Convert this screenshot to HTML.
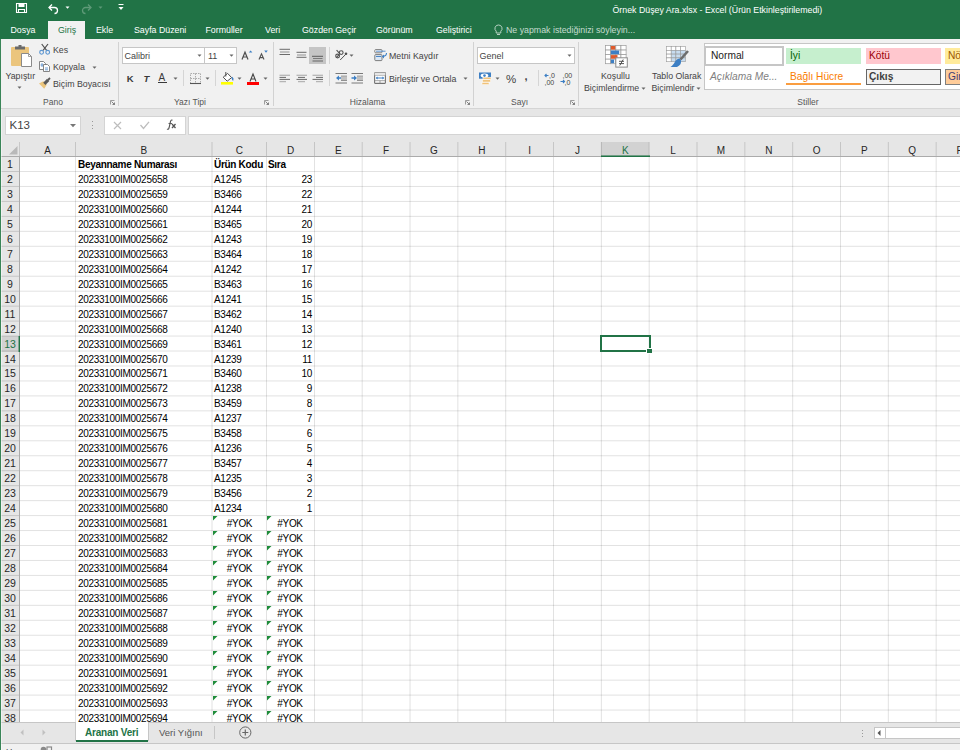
<!DOCTYPE html><html><head><meta charset="utf-8"><style>
html,body{margin:0;padding:0;}
body{width:960px;height:750px;overflow:hidden;position:relative;background:#fff;font-family:"Liberation Sans", sans-serif;}
.t{position:absolute;white-space:nowrap;line-height:1;}
svg{position:absolute;overflow:visible;}
</style></head><body>
<div style="position:absolute;left:0px;top:0px;width:960px;height:39px;background:#217346"></div>
<div class="t" style="left:612.5px;top:6.15px;font-size:8.8px;color:#fff">Örnek Düşey Ara.xlsx - Excel (Ürün Etkinleştirilemedi)</div>
<svg style="left:16px;top:3px" width="11" height="10" viewBox="0 0 11 10"><path d="M0.5 0.5H10.5V9.5H0.5Z" fill="none" stroke="#fff" stroke-width="1.1"/><rect x="2.5" y="0.5" width="6" height="3.5" fill="#fff"/><path d="M2.5 9.5V6.5H8.5V9.5" fill="none" stroke="#fff" stroke-width="1.1"/></svg>
<svg style="left:48px;top:3px" width="11" height="10" viewBox="0 0 11 10"><path d="M1.5 4.5H6.5A3 3 0 0 1 6.5 10.5" fill="none" stroke="#fff" stroke-width="1.3"/><path d="M4 1.5L1 4.5L4 7.5" fill="none" stroke="#fff" stroke-width="1.3"/></svg>
<svg style="left:64.5px;top:5.5px" width="5" height="3" viewBox="0 0 5 3"><path d="M0.5 0.5H4.5L2.5 2.8Z" fill="#fff"/></svg>
<svg style="left:81px;top:3px" width="11" height="10" viewBox="0 0 11 10"><path d="M9.5 4.5H4.5A3 3 0 0 0 4.5 10.5" fill="none" stroke="#5f9a78" stroke-width="1.3"/><path d="M7 1.5L10 4.5L7 7.5" fill="none" stroke="#5f9a78" stroke-width="1.3"/></svg>
<svg style="left:97.5px;top:5.5px" width="5" height="3" viewBox="0 0 5 3"><path d="M0.5 0.5H4.5L2.5 2.8Z" fill="#5f9a78"/></svg>
<svg style="left:118.3px;top:4px" width="6" height="7" viewBox="0 0 6 7"><rect x="0.5" y="0" width="5" height="1" fill="#fff"/><path d="M0.5 3H5.5L3 6Z" fill="#fff"/></svg>
<div class="t" style="left:10.5px;top:25.95px;font-size:8.8px;color:#fff">Dosya</div>
<div class="t" style="left:96px;top:25.95px;font-size:8.8px;color:#fff">Ekle</div>
<div class="t" style="left:134px;top:25.95px;font-size:8.8px;color:#fff">Sayfa Düzeni</div>
<div class="t" style="left:205.5px;top:25.95px;font-size:8.8px;color:#fff">Formüller</div>
<div class="t" style="left:265px;top:25.95px;font-size:8.8px;color:#fff">Veri</div>
<div class="t" style="left:302px;top:25.95px;font-size:8.8px;color:#fff">Gözden Geçir</div>
<div class="t" style="left:376px;top:25.95px;font-size:8.8px;color:#fff">Görünüm</div>
<div class="t" style="left:436px;top:25.95px;font-size:8.8px;color:#fff">Geliştirici</div>
<div style="position:absolute;left:48px;top:21px;width:37px;height:18px;background:#f1f1f1"></div>
<div class="t" style="left:58px;top:25.95px;font-size:8.8px;color:#217346">Giriş</div>
<svg style="left:494px;top:24px" width="9" height="12" viewBox="0 0 9 12"><path d="M4.5 1A3.5 3.5 0 0 0 2.2 7.2V9H6.8V7.2A3.5 3.5 0 0 0 4.5 1Z" fill="none" stroke="#c5dccf" stroke-width="0.9"/><path d="M3 10.5H6" stroke="#c5dccf" stroke-width="0.9"/></svg>
<div class="t" style="left:506px;top:25.95px;font-size:8.8px;color:#c5dccf">Ne yapmak istediğinizi söyleyin...</div>
<div style="position:absolute;left:0px;top:39px;width:960px;height:69px;background:#f1f1f1"></div>
<div style="position:absolute;left:0px;top:108px;width:960px;height:1px;background:#d5d5d5"></div>
<div style="position:absolute;left:118px;top:42px;width:1px;height:64px;background:#d2d2d2"></div>
<div style="position:absolute;left:273px;top:42px;width:1px;height:64px;background:#d2d2d2"></div>
<div style="position:absolute;left:473px;top:42px;width:1px;height:64px;background:#d2d2d2"></div>
<div style="position:absolute;left:578px;top:42px;width:1px;height:64px;background:#d2d2d2"></div>
<div class="t" style="left:13px;top:97.80px;font-size:8.5px;width:80px;text-align:center;color:#555">Pano</div>
<div class="t" style="left:150px;top:97.80px;font-size:8.5px;width:80px;text-align:center;color:#555">Yazı Tipi</div>
<div class="t" style="left:327.5px;top:97.80px;font-size:8.5px;width:80px;text-align:center;color:#555">Hizalama</div>
<div class="t" style="left:479.5px;top:97.80px;font-size:8.5px;width:80px;text-align:center;color:#555">Sayı</div>
<div class="t" style="left:768px;top:97.80px;font-size:8.5px;width:80px;text-align:center;color:#555">Stiller</div>
<svg style="left:110px;top:100px" width="5" height="5" viewBox="0 0 5 5"><path d="M0.5 4.5V0.5H4.5" fill="none" stroke="#888" stroke-width="0.8"/><path d="M1.5 1.5L4.5 4.5M4.5 2.5V4.5H2.5" fill="none" stroke="#666" stroke-width="0.8"/></svg>
<svg style="left:264px;top:100px" width="5" height="5" viewBox="0 0 5 5"><path d="M0.5 4.5V0.5H4.5" fill="none" stroke="#888" stroke-width="0.8"/><path d="M1.5 1.5L4.5 4.5M4.5 2.5V4.5H2.5" fill="none" stroke="#666" stroke-width="0.8"/></svg>
<svg style="left:465px;top:100px" width="5" height="5" viewBox="0 0 5 5"><path d="M0.5 4.5V0.5H4.5" fill="none" stroke="#888" stroke-width="0.8"/><path d="M1.5 1.5L4.5 4.5M4.5 2.5V4.5H2.5" fill="none" stroke="#666" stroke-width="0.8"/></svg>
<svg style="left:570px;top:100px" width="5" height="5" viewBox="0 0 5 5"><path d="M0.5 4.5V0.5H4.5" fill="none" stroke="#888" stroke-width="0.8"/><path d="M1.5 1.5L4.5 4.5M4.5 2.5V4.5H2.5" fill="none" stroke="#666" stroke-width="0.8"/></svg>
<svg style="left:10px;top:44px" width="23" height="24" viewBox="0 0 23 24"><rect x="1" y="3" width="18" height="19" rx="1" fill="#ebc57d"/>
<path d="M5 2.5H15V5.5H5Z" fill="#6a6a6a"/><rect x="8.5" y="1" width="3" height="2" fill="#6a6a6a"/>
<path d="M11.5 9.5H18.5L21.5 12.5V22.5H11.5Z" fill="#fff" stroke="#8a8a8a" stroke-width="1"/><path d="M18.5 9.5V12.5H21.5" fill="none" stroke="#8a8a8a" stroke-width="0.8"/></svg>
<div class="t" style="left:5.5px;top:72.05px;font-size:8.8px;color:#444">Yapıştır</div>
<svg style="left:17.0px;top:85.5px" width="5" height="3" viewBox="0 0 5 3"><path d="M0.5 0.5H4.5L2.5 2.8Z" fill="#666"/></svg>
<svg style="left:39px;top:43px" width="12" height="12" viewBox="0 0 12 12"><path d="M2.7 1L7.6 7.3M9 1L4.1 7.3" stroke="#505050" stroke-width="1.2"/><circle cx="2.6" cy="9.3" r="1.9" fill="none" stroke="#5b95d0" stroke-width="1.1"/><circle cx="8.7" cy="9.3" r="1.9" fill="none" stroke="#5b95d0" stroke-width="1.1"/></svg>
<div class="t" style="left:53px;top:45.55px;font-size:8.8px;color:#444">Kes</div>
<svg style="left:39px;top:61px" width="12" height="11" viewBox="0 0 12 11"><path d="M0.5 0.5H4.5L6.5 2.5V8.5H0.5Z" fill="#fff" stroke="#777" stroke-width="0.9"/><path d="M3 2V6M1.5 4H4.5" stroke="#4a86c8" stroke-width="0.8"/>
<path d="M4.5 3.5H8.5L10.5 5.5V10.5H4.5Z" fill="#fff" stroke="#777" stroke-width="0.9"/><path d="M6 7H9M6 8.8H9" stroke="#4a86c8" stroke-width="0.8"/></svg>
<div class="t" style="left:53px;top:63.05px;font-size:8.8px;color:#444">Kopyala</div>
<svg style="left:91.5px;top:66.0px" width="5" height="3" viewBox="0 0 5 3"><path d="M0.5 0.5H4.5L2.5 2.8Z" fill="#666"/></svg>
<svg style="left:39px;top:77px" width="13" height="13" viewBox="0 0 13 13"><path d="M0 6.5L4.3 4.3L7.8 7.8L5.2 11.8Z" fill="#ebc57d"/><path d="M5.3 6.8L9.2 2.9" stroke="#5a5a5a" stroke-width="3.2"/><path d="M9 3L11 1" stroke="#5a5a5a" stroke-width="1.8"/></svg>
<div class="t" style="left:53px;top:80.05px;font-size:8.8px;color:#444">Biçim Boyacısı</div>
<div style="position:absolute;left:122px;top:47px;width:83px;height:17px;background:#fff;border:1px solid #c6c6c6;box-sizing:border-box"></div>
<div class="t" style="left:124.5px;top:52.18px;font-size:9px;color:#444">Calibri</div>
<svg style="left:196.5px;top:54.0px" width="5" height="3" viewBox="0 0 5 3"><path d="M0.5 0.5H4.5L2.5 2.8Z" fill="#666"/></svg>
<div style="position:absolute;left:204px;top:47px;width:33px;height:17px;background:#fff;border:1px solid #c6c6c6;box-sizing:border-box"></div>
<div class="t" style="left:208px;top:52.18px;font-size:9px;color:#444">11</div>
<svg style="left:228.5px;top:54.0px" width="5" height="3" viewBox="0 0 5 3"><path d="M0.5 0.5H4.5L2.5 2.8Z" fill="#666"/></svg>
<svg style="left:241px;top:50px" width="12" height="10" viewBox="0 0 12 10"><path d="M1 9.5L4 2.2L7 9.5M2.2 7H5.8" fill="none" stroke="#505050" stroke-width="1.2"/><path d="M7.8 2.6L9.6 0.4L11.4 2.6Z" fill="#3d7fc4"/></svg>
<svg style="left:258px;top:50px" width="10" height="10" viewBox="0 0 10 10"><path d="M1 9.5L3.5 3.8L6 9.5M2 7.6H5" fill="none" stroke="#505050" stroke-width="1.1"/><path d="M6.2 0.6H9.8L8 2.8Z" fill="#3d7fc4"/></svg>
<div class="t" style="left:126.8px;top:73.96px;font-size:9.5px;color:#3a3a3a;font-weight:bold">K</div>
<div class="t" style="left:143.5px;top:73.96px;font-size:9.5px;color:#3a3a3a;font-weight:bold;font-style:italic">T</div>
<div class="t" style="left:158.5px;top:73.03px;font-size:10px;color:#3a3a3a">A</div>
<div style="position:absolute;left:158px;top:82px;width:9px;height:1.2px;background:#3a3a3a"></div>
<svg style="left:172.5px;top:77.0px" width="5" height="3" viewBox="0 0 5 3"><path d="M0.5 0.5H4.5L2.5 2.8Z" fill="#666"/></svg>
<div style="position:absolute;left:183px;top:70px;width:1px;height:16px;background:#d5d5d5"></div>
<svg style="left:190px;top:73px" width="11" height="11" viewBox="0 0 11 11"><path d="M0.5 0.5H10.5V10.5H0.5ZM5.5 0.5V10.5M0.5 5.5H10.5" fill="none" stroke="#9a9a9a" stroke-width="0.8" stroke-dasharray="1.5 1"/><path d="M0 10.5H11" stroke="#555" stroke-width="1.1"/></svg>
<svg style="left:205.0px;top:77.0px" width="5" height="3" viewBox="0 0 5 3"><path d="M0.5 0.5H4.5L2.5 2.8Z" fill="#666"/></svg>
<div style="position:absolute;left:215px;top:70px;width:1px;height:16px;background:#d5d5d5"></div>
<svg style="left:221px;top:71px" width="13" height="14" viewBox="0 0 13 14"><path d="M2.2 6.2L6.6 2.4L10.6 6.6L6.2 10.2Z" fill="#fff" stroke="#505050" stroke-width="1"/><path d="M4.8 1V5.5" stroke="#505050" stroke-width="1"/><path d="M10.8 6.4Q12.4 7.6 11.6 9.4" fill="none" stroke="#3d7fc4" stroke-width="1.5"/><rect x="0" y="11" width="12" height="2.6" fill="#ffff00"/></svg>
<svg style="left:237.0px;top:77.0px" width="5" height="3" viewBox="0 0 5 3"><path d="M0.5 0.5H4.5L2.5 2.8Z" fill="#666"/></svg>
<svg style="left:247px;top:73px" width="13" height="12" viewBox="0 0 13 12"><path d="M3 8.5L6 1L9 8.5M4 6H8" fill="none" stroke="#444" stroke-width="1.1"/><rect x="0" y="9" width="12" height="3" fill="#ff0000"/></svg>
<svg style="left:262.5px;top:77.0px" width="5" height="3" viewBox="0 0 5 3"><path d="M0.5 0.5H4.5L2.5 2.8Z" fill="#666"/></svg>
<div style="position:absolute;left:309px;top:47px;width:17px;height:17px;background:#c5c5c5"></div>
<svg style="left:279px;top:47px" width="12" height="14" viewBox="0 0 12 14"><path d="M0.5 2.3H11" stroke="#6b6b6b" stroke-width="1"/><path d="M1 5H10.5" stroke="#b5b5b5" stroke-width="1.6"/><path d="M0.5 7.5H11" stroke="#6b6b6b" stroke-width="1"/></svg>
<svg style="left:296px;top:50px" width="12" height="14" viewBox="0 0 12 14"><path d="M0.5 2.3H10.5" stroke="#6b6b6b" stroke-width="1"/><path d="M1 5H10" stroke="#b5b5b5" stroke-width="1.6"/><path d="M0.5 7.3H10.5" stroke="#6b6b6b" stroke-width="1"/></svg>
<svg style="left:312px;top:53px" width="12" height="14" viewBox="0 0 12 14"><path d="M0 3.3H11" stroke="#5a5a5a" stroke-width="1"/><path d="M1 5.5H10.5" stroke="#7a7a7a" stroke-width="1"/><path d="M0.5 8H11" stroke="#8a8a8a" stroke-width="1.6"/></svg>
<div style="position:absolute;left:329px;top:47px;width:1px;height:17px;background:#d5d5d5"></div>
<svg style="left:332px;top:46px" width="24" height="18" viewBox="0 0 24 18"><circle cx="5.6" cy="10" r="1.9" fill="none" stroke="#505050" stroke-width="1.1"/><path d="M4.2 11.6L7.4 8.4" stroke="#505050" stroke-width="1.1"/><circle cx="9.2" cy="6.6" r="1.9" fill="none" stroke="#505050" stroke-width="1.1"/><path d="M4.6 4.2L8 7.8" stroke="#505050" stroke-width="1.1"/><path d="M8.2 14L14 8" stroke="#505050" stroke-width="1"/><circle cx="14" cy="7.8" r="1.3" fill="#505050"/></svg>
<svg style="left:349.0px;top:53.5px" width="5" height="3" viewBox="0 0 5 3"><path d="M0.5 0.5H4.5L2.5 2.8Z" fill="#666"/></svg>
<svg style="left:279px;top:73px" width="12" height="14" viewBox="0 0 12 14"><path d="M0.5 2.3H11" stroke="#b5b5b5" stroke-width="1.3"/><path d="M0.5 4.4H7" stroke="#6b6b6b" stroke-width="1"/><path d="M0.5 6.4H11" stroke="#6b6b6b" stroke-width="1"/><path d="M0.5 8.6H7" stroke="#b5b5b5" stroke-width="1.3"/></svg>
<svg style="left:296px;top:73px" width="12" height="14" viewBox="0 0 12 14"><path d="M0.5 2.3H11" stroke="#b5b5b5" stroke-width="1.3"/><path d="M2 4.4H9" stroke="#6b6b6b" stroke-width="1"/><path d="M0.5 6.4H11" stroke="#6b6b6b" stroke-width="1"/><path d="M2 8.6H9" stroke="#b5b5b5" stroke-width="1.3"/></svg>
<svg style="left:312px;top:73px" width="12" height="14" viewBox="0 0 12 14"><path d="M0.5 2.3H11" stroke="#b5b5b5" stroke-width="1.3"/><path d="M4 4.4H11" stroke="#6b6b6b" stroke-width="1"/><path d="M0.5 6.4H11" stroke="#6b6b6b" stroke-width="1"/><path d="M4 8.6H11" stroke="#b5b5b5" stroke-width="1.3"/></svg>
<div style="position:absolute;left:329px;top:70px;width:1px;height:16px;background:#d5d5d5"></div>
<svg style="left:335px;top:73px" width="13" height="11" viewBox="0 0 13 11"><path d="M0.5 0.5H12M6 3.2H12M6 5.2H12M6 7.3H12M0.5 10H12" stroke="#6b6b6b" stroke-width="0.9"/><path d="M6 3.5H12V7H6Z" fill="#c0c0c0"/><path d="M1 5L4 2.5V7.5Z" fill="#3d7fc4"/><path d="M3 5H6" stroke="#3d7fc4" stroke-width="1.5"/></svg>
<svg style="left:351px;top:73px" width="13" height="11" viewBox="0 0 13 11"><path d="M0.5 0.5H12M6 3.2H12M6 5.2H12M6 7.3H12M0.5 10H12" stroke="#6b6b6b" stroke-width="0.9"/><path d="M6 3.5H12V7H6Z" fill="#c0c0c0"/><path d="M6 5L3 2.5V7.5Z" fill="#3d7fc4"/><path d="M0.5 5H3.5" stroke="#3d7fc4" stroke-width="1.5"/></svg>
<svg style="left:374px;top:49px" width="14" height="12" viewBox="0 0 14 12"><rect x="0.8" y="0.6" width="7.2" height="3.2" rx="0.8" fill="#fff" stroke="#707070" stroke-width="0.9"/><path d="M2 2.2H11.5" stroke="#4a86c8" stroke-width="0.9"/><rect x="0.8" y="5.6" width="7.2" height="6" rx="0.8" fill="#dce8f5" stroke="#707070" stroke-width="0.9"/><path d="M2 7.5H7" stroke="#4a86c8" stroke-width="1"/><path d="M12.5 4Q12.5 7 9 7.5" fill="none" stroke="#3d7fc4" stroke-width="1.1"/><path d="M10 5.6L7.8 7.6L10 9.4Z" fill="#3d7fc4"/></svg>
<div class="t" style="left:389px;top:51.65px;font-size:8.8px;color:#444">Metni Kaydır</div>
<svg style="left:374px;top:72px" width="12" height="12" viewBox="0 0 12 12"><rect x="0.6" y="0.6" width="10.8" height="10.8" rx="0.6" fill="#fff" stroke="#727272" stroke-width="1.1"/><path d="M0.6 3.3H11.4M0.6 8.7H11.4M6 0.6V3.3M6 8.7V11.4" stroke="#8a8a8a" stroke-width="0.8"/><path d="M0.6 0.6H11.4V3.3H0.6Z" fill="#e6e6e6"/><path d="M2.3 6H9.7" stroke="#3d7fc4" stroke-width="1"/><path d="M1.8 6L3.6 4.6V7.4ZM10.2 6L8.4 4.6V7.4Z" fill="#3d7fc4"/></svg>
<div class="t" style="left:389px;top:74.75px;font-size:8.8px;color:#444">Birleştir ve Ortala</div>
<svg style="left:462.5px;top:77.0px" width="5" height="3" viewBox="0 0 5 3"><path d="M0.5 0.5H4.5L2.5 2.8Z" fill="#666"/></svg>
<div style="position:absolute;left:477px;top:47px;width:98px;height:17px;background:#fff;border:1px solid #c6c6c6;box-sizing:border-box"></div>
<div class="t" style="left:479.5px;top:52.18px;font-size:9px;color:#444">Genel</div>
<svg style="left:566.5px;top:54.0px" width="5" height="3" viewBox="0 0 5 3"><path d="M0.5 0.5H4.5L2.5 2.8Z" fill="#666"/></svg>
<svg style="left:479px;top:72px" width="13" height="13" viewBox="0 0 13 13"><rect x="0" y="0.5" width="12" height="6.2" fill="#3d7fc4"/><ellipse cx="5.5" cy="3.6" rx="3.8" ry="2.1" fill="#fff"/><circle cx="5.5" cy="3.6" r="1.3" fill="#3d7fc4"/><rect x="4" y="5.2" width="8" height="2.2" fill="#f0c27a" stroke="#fff" stroke-width="0.5"/><rect x="3.5" y="7.8" width="8" height="2.2" fill="#f0c27a" stroke="#fff" stroke-width="0.5"/><rect x="3" y="10.4" width="7" height="2.2" fill="#f0c27a" stroke="#fff" stroke-width="0.5"/></svg>
<svg style="left:494.5px;top:77.0px" width="5" height="3" viewBox="0 0 5 3"><path d="M0.5 0.5H4.5L2.5 2.8Z" fill="#666"/></svg>
<div class="t" style="left:506px;top:73.77px;font-size:11.5px;color:#444">%</div>
<div class="t" style="left:524.5px;top:70.69px;font-size:11px;color:#444;font-weight:bold">,</div>
<div style="position:absolute;left:538px;top:70px;width:1px;height:16px;background:#d5d5d5"></div>
<svg style="left:544px;top:72px" width="12" height="13" viewBox="0 0 12 13"><text x="5" y="6" font-size="7" font-family="Liberation Sans" fill="#444">,0</text><text x="0.5" y="12.5" font-size="7" font-family="Liberation Sans" fill="#444">,00</text><path d="M4.5 3.5H1M2.5 2L1 3.5L2.5 5" fill="none" stroke="#3d7fc4" stroke-width="1.1"/></svg>
<svg style="left:560px;top:72px" width="12" height="13" viewBox="0 0 12 13"><text x="2.5" y="6" font-size="7" font-family="Liberation Sans" fill="#444">,00</text><text x="4.5" y="12.5" font-size="7" font-family="Liberation Sans" fill="#444">,0</text><path d="M0.5 9.5H4.5M3 8L4.5 9.5L3 11" fill="none" stroke="#3d7fc4" stroke-width="1.1"/></svg>
<svg style="left:604.8px;top:44.8px" width="24" height="24" viewBox="0 0 24 24"><rect x="0.50" y="0.50" width="5.15" height="4.55" fill="#fff" stroke="#9a9a9a" stroke-width="0.7"/><rect x="5.65" y="0.50" width="5.15" height="4.55" fill="#fff" stroke="#9a9a9a" stroke-width="0.7"/><rect x="10.80" y="0.50" width="5.15" height="4.55" fill="#fff" stroke="#9a9a9a" stroke-width="0.7"/><rect x="15.95" y="0.50" width="5.15" height="4.55" fill="#fff" stroke="#9a9a9a" stroke-width="0.7"/><rect x="0.50" y="5.05" width="5.15" height="4.55" fill="#fff" stroke="#9a9a9a" stroke-width="0.7"/><rect x="5.65" y="5.05" width="5.15" height="4.55" fill="#fff" stroke="#9a9a9a" stroke-width="0.7"/><rect x="10.80" y="5.05" width="5.15" height="4.55" fill="#fff" stroke="#9a9a9a" stroke-width="0.7"/><rect x="15.95" y="5.05" width="5.15" height="4.55" fill="#fff" stroke="#9a9a9a" stroke-width="0.7"/><rect x="0.50" y="9.60" width="5.15" height="4.55" fill="#fff" stroke="#9a9a9a" stroke-width="0.7"/><rect x="5.65" y="9.60" width="5.15" height="4.55" fill="#fff" stroke="#9a9a9a" stroke-width="0.7"/><rect x="10.80" y="9.60" width="5.15" height="4.55" fill="#fff" stroke="#9a9a9a" stroke-width="0.7"/><rect x="15.95" y="9.60" width="5.15" height="4.55" fill="#fff" stroke="#9a9a9a" stroke-width="0.7"/><rect x="0.50" y="14.15" width="5.15" height="4.55" fill="#fff" stroke="#9a9a9a" stroke-width="0.7"/><rect x="5.65" y="14.15" width="5.15" height="4.55" fill="#fff" stroke="#9a9a9a" stroke-width="0.7"/><rect x="10.80" y="14.15" width="5.15" height="4.55" fill="#fff" stroke="#9a9a9a" stroke-width="0.7"/><rect x="15.95" y="14.15" width="5.15" height="4.55" fill="#fff" stroke="#9a9a9a" stroke-width="0.7"/><rect x="5.9" y="1" width="4.3" height="3.6" fill="#e05a2b"/><rect x="5.9" y="5.5" width="8.3" height="3.6" fill="#3d7fc4"/><rect x="5.9" y="10.1" width="6.6" height="3.6" fill="#e05a2b"/><rect x="5.9" y="14.6" width="3.2" height="3.6" fill="#3d7fc4"/><rect x="10.8" y="12.8" width="11.5" height="9.3" fill="#fff" stroke="#8a8a8a" stroke-width="1"/><path d="M14 16.3H19M14 18.6H19M18.2 14.5L14.8 20.5" stroke="#444" stroke-width="0.9"/></svg>
<div class="t" style="left:601px;top:71.55px;font-size:8.8px;color:#444">Koşullu</div>
<div class="t" style="left:584px;top:83.55px;font-size:8.8px;color:#444">Biçimlendirme</div>
<svg style="left:641.0px;top:87.0px" width="5" height="3" viewBox="0 0 5 3"><path d="M0.5 0.5H4.5L2.5 2.8Z" fill="#666"/></svg>
<svg style="left:666px;top:46px" width="24" height="22" viewBox="0 0 24 22"><rect x="0.50" y="0.50" width="4.7" height="3.8" fill="#fff" stroke="#9a9a9a" stroke-width="0.6"/><rect x="5.20" y="0.50" width="4.7" height="3.8" fill="#fff" stroke="#9a9a9a" stroke-width="0.6"/><rect x="9.90" y="0.50" width="4.7" height="3.8" fill="#fff" stroke="#9a9a9a" stroke-width="0.6"/><rect x="14.60" y="0.50" width="4.7" height="3.8" fill="#fff" stroke="#9a9a9a" stroke-width="0.6"/><rect x="0.50" y="4.30" width="4.7" height="3.8" fill="#fff" stroke="#9a9a9a" stroke-width="0.6"/><rect x="5.20" y="4.30" width="4.7" height="3.8" fill="#c7dcf0" stroke="#9a9a9a" stroke-width="0.6"/><rect x="9.90" y="4.30" width="4.7" height="3.8" fill="#c7dcf0" stroke="#9a9a9a" stroke-width="0.6"/><rect x="14.60" y="4.30" width="4.7" height="3.8" fill="#c7dcf0" stroke="#9a9a9a" stroke-width="0.6"/><rect x="0.50" y="8.10" width="4.7" height="3.8" fill="#fff" stroke="#9a9a9a" stroke-width="0.6"/><rect x="5.20" y="8.10" width="4.7" height="3.8" fill="#c7dcf0" stroke="#9a9a9a" stroke-width="0.6"/><rect x="9.90" y="8.10" width="4.7" height="3.8" fill="#c7dcf0" stroke="#9a9a9a" stroke-width="0.6"/><rect x="14.60" y="8.10" width="4.7" height="3.8" fill="#c7dcf0" stroke="#9a9a9a" stroke-width="0.6"/><rect x="0.50" y="11.90" width="4.7" height="3.8" fill="#fff" stroke="#9a9a9a" stroke-width="0.6"/><rect x="5.20" y="11.90" width="4.7" height="3.8" fill="#c7dcf0" stroke="#9a9a9a" stroke-width="0.6"/><rect x="9.90" y="11.90" width="4.7" height="3.8" fill="#c7dcf0" stroke="#9a9a9a" stroke-width="0.6"/><rect x="14.60" y="11.90" width="4.7" height="3.8" fill="#c7dcf0" stroke="#9a9a9a" stroke-width="0.6"/><path d="M22 5L14.5 13.5" stroke="#6d6d6d" stroke-width="2.6"/><path d="M13.5 12.5Q10 13 8 17.5Q6 20 4.5 21H11Q15.5 19 15 14.5Z" fill="#3d7fc4"/></svg>
<div class="t" style="left:652px;top:71.55px;font-size:8.8px;color:#444">Tablo Olarak</div>
<div class="t" style="left:651.5px;top:83.55px;font-size:8.8px;color:#444">Biçimlendir</div>
<svg style="left:695.5px;top:87.0px" width="5" height="3" viewBox="0 0 5 3"><path d="M0.5 0.5H4.5L2.5 2.8Z" fill="#666"/></svg>
<div style="position:absolute;left:704px;top:43px;width:270px;height:47px;background:#fff;border:1px solid #c6c6c6;box-sizing:border-box"></div>
<div style="position:absolute;left:704px;top:46px;width:80px;height:20px;background:#fff;border:2px solid #c6c6c6;box-sizing:border-box"></div>
<div class="t" style="left:711px;top:50.57px;font-size:10.2px;color:#222">Normal</div>
<div style="position:absolute;left:786px;top:48px;width:75px;height:16px;background:#c6efce"></div>
<div class="t" style="left:790px;top:50.57px;font-size:10.2px;color:#006100">İyi</div>
<div style="position:absolute;left:866px;top:48px;width:75px;height:16px;background:#ffc7ce"></div>
<div class="t" style="left:869px;top:50.57px;font-size:10.2px;color:#9c0006">Kötü</div>
<div style="position:absolute;left:945px;top:48px;width:40px;height:16px;background:#ffeb9c"></div>
<div class="t" style="left:948px;top:50.57px;font-size:10.2px;color:#9c5700">Nötr</div>
<div class="t" style="left:710px;top:72.17px;font-size:10.2px;color:#7f7f7f;font-style:italic">Açıklama Me...</div>
<div class="t" style="left:790px;top:72.17px;font-size:10.2px;color:#fa7d00">Bağlı Hücre</div>
<div style="position:absolute;left:786px;top:83px;width:75px;height:2px;background:#fa9d40"></div>
<div style="position:absolute;left:866px;top:69px;width:75px;height:16px;background:#f2f2f2;border:1px solid #666;box-sizing:border-box"></div>
<div class="t" style="left:869px;top:72.17px;font-size:10.2px;color:#3f3f3f;font-weight:bold">Çıkış</div>
<div style="position:absolute;left:945px;top:69px;width:40px;height:16px;background:#ffcc99;border:1px solid #7f7f7f;box-sizing:border-box"></div>
<div class="t" style="left:948px;top:72.17px;font-size:10.2px;color:#3f3f76">Giriş</div>
<div style="position:absolute;left:0px;top:109px;width:960px;height:33px;background:#e6e6e6"></div>
<div style="position:absolute;left:5px;top:116px;width:76px;height:19px;background:#fff;border:1px solid #d4d4d4;box-sizing:border-box"></div>
<div class="t" style="left:9.5px;top:120.27px;font-size:11.5px;color:#444">K13</div>
<svg style="left:70px;top:123.5px" width="6" height="4" viewBox="0 0 6 4"><path d="M0 0H6L3 3.2Z" fill="#777"/></svg>
<div style="position:absolute;left:91.5px;top:121px;width:1.2px;height:1.2px;background:#999"></div>
<div style="position:absolute;left:91.5px;top:124.5px;width:1.2px;height:1.2px;background:#999"></div>
<div style="position:absolute;left:91.5px;top:128px;width:1.2px;height:1.2px;background:#999"></div>
<div style="position:absolute;left:104px;top:116px;width:82px;height:19px;background:#fff;border:1px solid #d4d4d4;box-sizing:border-box"></div>
<svg style="left:113px;top:121px" width="9" height="9" viewBox="0 0 9 9"><path d="M1 1L8 8M8 1L1 8" stroke="#bdbdbd" stroke-width="1.2"/></svg>
<svg style="left:140px;top:121px" width="10" height="9" viewBox="0 0 10 9"><path d="M0.5 4L3.5 7.5L9 0.8" fill="none" stroke="#bdbdbd" stroke-width="1.3"/></svg>
<svg style="left:166px;top:119px" width="12" height="11" viewBox="0 0 12 11"><path d="M6.5 1.2Q5 0.5 4.5 2.5L3 9Q2.5 10.8 1 10" fill="none" stroke="#555" stroke-width="1.1"/><path d="M2.5 4.5H6" stroke="#555" stroke-width="0.9"/><path d="M6 5L9.5 9M9.5 5L6 9" stroke="#555" stroke-width="1.3"/></svg>
<div style="position:absolute;left:188px;top:116px;width:780px;height:19px;background:#fff;border:1px solid #d4d4d4;box-sizing:border-box"></div>
<div style="position:absolute;left:0px;top:142px;width:960px;height:14px;background:#e6e6e6"></div>
<div style="position:absolute;left:0px;top:156px;width:19px;height:566px;background:#e6e6e6"></div>
<svg style="left:8.5px;top:145.5px" width="9" height="9" viewBox="0 0 9 9"><path d="M8.5 0V8.5H0Z" fill="#b9b9b9"/></svg>
<div style="position:absolute;left:601px;top:142px;width:48px;height:14px;background:#d2d2d2"></div>
<div style="position:absolute;left:1px;top:336px;width:18px;height:16px;background:#d2d2d2"></div>
<div style="position:absolute;left:19px;top:171px;width:941px;height:1px;background:rgba(0,0,0,0.115)"></div>
<div style="position:absolute;left:0px;top:171px;width:19px;height:1px;background:rgba(0,0,0,0.140)"></div>
<div style="position:absolute;left:19px;top:185px;width:941px;height:1px;background:rgba(0,0,0,0.005)"></div>
<div style="position:absolute;left:19px;top:186px;width:941px;height:1px;background:rgba(0,0,0,0.110)"></div>
<div style="position:absolute;left:0px;top:185px;width:19px;height:1px;background:rgba(0,0,0,0.006)"></div>
<div style="position:absolute;left:0px;top:186px;width:19px;height:1px;background:rgba(0,0,0,0.134)"></div>
<div style="position:absolute;left:19px;top:200px;width:941px;height:1px;background:rgba(0,0,0,0.009)"></div>
<div style="position:absolute;left:19px;top:201px;width:941px;height:1px;background:rgba(0,0,0,0.106)"></div>
<div style="position:absolute;left:0px;top:200px;width:19px;height:1px;background:rgba(0,0,0,0.011)"></div>
<div style="position:absolute;left:0px;top:201px;width:19px;height:1px;background:rgba(0,0,0,0.129)"></div>
<div style="position:absolute;left:19px;top:215px;width:941px;height:1px;background:rgba(0,0,0,0.014)"></div>
<div style="position:absolute;left:19px;top:216px;width:941px;height:1px;background:rgba(0,0,0,0.101)"></div>
<div style="position:absolute;left:0px;top:215px;width:19px;height:1px;background:rgba(0,0,0,0.017)"></div>
<div style="position:absolute;left:0px;top:216px;width:19px;height:1px;background:rgba(0,0,0,0.123)"></div>
<div style="position:absolute;left:19px;top:230px;width:941px;height:1px;background:rgba(0,0,0,0.018)"></div>
<div style="position:absolute;left:19px;top:231px;width:941px;height:1px;background:rgba(0,0,0,0.097)"></div>
<div style="position:absolute;left:0px;top:230px;width:19px;height:1px;background:rgba(0,0,0,0.022)"></div>
<div style="position:absolute;left:0px;top:231px;width:19px;height:1px;background:rgba(0,0,0,0.118)"></div>
<div style="position:absolute;left:19px;top:245px;width:941px;height:1px;background:rgba(0,0,0,0.023)"></div>
<div style="position:absolute;left:19px;top:246px;width:941px;height:1px;background:rgba(0,0,0,0.092)"></div>
<div style="position:absolute;left:0px;top:245px;width:19px;height:1px;background:rgba(0,0,0,0.028)"></div>
<div style="position:absolute;left:0px;top:246px;width:19px;height:1px;background:rgba(0,0,0,0.112)"></div>
<div style="position:absolute;left:19px;top:260px;width:941px;height:1px;background:rgba(0,0,0,0.028)"></div>
<div style="position:absolute;left:19px;top:261px;width:941px;height:1px;background:rgba(0,0,0,0.087)"></div>
<div style="position:absolute;left:0px;top:260px;width:19px;height:1px;background:rgba(0,0,0,0.034)"></div>
<div style="position:absolute;left:0px;top:261px;width:19px;height:1px;background:rgba(0,0,0,0.106)"></div>
<div style="position:absolute;left:19px;top:275px;width:941px;height:1px;background:rgba(0,0,0,0.032)"></div>
<div style="position:absolute;left:19px;top:276px;width:941px;height:1px;background:rgba(0,0,0,0.083)"></div>
<div style="position:absolute;left:0px;top:275px;width:19px;height:1px;background:rgba(0,0,0,0.039)"></div>
<div style="position:absolute;left:0px;top:276px;width:19px;height:1px;background:rgba(0,0,0,0.101)"></div>
<div style="position:absolute;left:19px;top:290px;width:941px;height:1px;background:rgba(0,0,0,0.037)"></div>
<div style="position:absolute;left:19px;top:291px;width:941px;height:1px;background:rgba(0,0,0,0.078)"></div>
<div style="position:absolute;left:0px;top:290px;width:19px;height:1px;background:rgba(0,0,0,0.045)"></div>
<div style="position:absolute;left:0px;top:291px;width:19px;height:1px;background:rgba(0,0,0,0.095)"></div>
<div style="position:absolute;left:19px;top:305px;width:941px;height:1px;background:rgba(0,0,0,0.041)"></div>
<div style="position:absolute;left:19px;top:306px;width:941px;height:1px;background:rgba(0,0,0,0.074)"></div>
<div style="position:absolute;left:0px;top:305px;width:19px;height:1px;background:rgba(0,0,0,0.050)"></div>
<div style="position:absolute;left:0px;top:306px;width:19px;height:1px;background:rgba(0,0,0,0.090)"></div>
<div style="position:absolute;left:19px;top:320px;width:941px;height:1px;background:rgba(0,0,0,0.046)"></div>
<div style="position:absolute;left:19px;top:321px;width:941px;height:1px;background:rgba(0,0,0,0.069)"></div>
<div style="position:absolute;left:0px;top:320px;width:19px;height:1px;background:rgba(0,0,0,0.056)"></div>
<div style="position:absolute;left:0px;top:321px;width:19px;height:1px;background:rgba(0,0,0,0.084)"></div>
<div style="position:absolute;left:19px;top:335px;width:941px;height:1px;background:rgba(0,0,0,0.051)"></div>
<div style="position:absolute;left:19px;top:336px;width:941px;height:1px;background:rgba(0,0,0,0.064)"></div>
<div style="position:absolute;left:0px;top:335px;width:19px;height:1px;background:rgba(0,0,0,0.062)"></div>
<div style="position:absolute;left:0px;top:336px;width:19px;height:1px;background:rgba(0,0,0,0.078)"></div>
<div style="position:absolute;left:19px;top:350px;width:941px;height:1px;background:rgba(0,0,0,0.055)"></div>
<div style="position:absolute;left:19px;top:351px;width:941px;height:1px;background:rgba(0,0,0,0.060)"></div>
<div style="position:absolute;left:0px;top:350px;width:19px;height:1px;background:rgba(0,0,0,0.067)"></div>
<div style="position:absolute;left:0px;top:351px;width:19px;height:1px;background:rgba(0,0,0,0.073)"></div>
<div style="position:absolute;left:19px;top:365px;width:941px;height:1px;background:rgba(0,0,0,0.060)"></div>
<div style="position:absolute;left:19px;top:366px;width:941px;height:1px;background:rgba(0,0,0,0.055)"></div>
<div style="position:absolute;left:0px;top:365px;width:19px;height:1px;background:rgba(0,0,0,0.073)"></div>
<div style="position:absolute;left:0px;top:366px;width:19px;height:1px;background:rgba(0,0,0,0.067)"></div>
<div style="position:absolute;left:19px;top:380px;width:941px;height:1px;background:rgba(0,0,0,0.064)"></div>
<div style="position:absolute;left:19px;top:381px;width:941px;height:1px;background:rgba(0,0,0,0.051)"></div>
<div style="position:absolute;left:0px;top:380px;width:19px;height:1px;background:rgba(0,0,0,0.078)"></div>
<div style="position:absolute;left:0px;top:381px;width:19px;height:1px;background:rgba(0,0,0,0.062)"></div>
<div style="position:absolute;left:19px;top:395px;width:941px;height:1px;background:rgba(0,0,0,0.069)"></div>
<div style="position:absolute;left:19px;top:396px;width:941px;height:1px;background:rgba(0,0,0,0.046)"></div>
<div style="position:absolute;left:0px;top:395px;width:19px;height:1px;background:rgba(0,0,0,0.084)"></div>
<div style="position:absolute;left:0px;top:396px;width:19px;height:1px;background:rgba(0,0,0,0.056)"></div>
<div style="position:absolute;left:19px;top:410px;width:941px;height:1px;background:rgba(0,0,0,0.074)"></div>
<div style="position:absolute;left:19px;top:411px;width:941px;height:1px;background:rgba(0,0,0,0.041)"></div>
<div style="position:absolute;left:0px;top:410px;width:19px;height:1px;background:rgba(0,0,0,0.090)"></div>
<div style="position:absolute;left:0px;top:411px;width:19px;height:1px;background:rgba(0,0,0,0.050)"></div>
<div style="position:absolute;left:19px;top:425px;width:941px;height:1px;background:rgba(0,0,0,0.078)"></div>
<div style="position:absolute;left:19px;top:426px;width:941px;height:1px;background:rgba(0,0,0,0.037)"></div>
<div style="position:absolute;left:0px;top:425px;width:19px;height:1px;background:rgba(0,0,0,0.095)"></div>
<div style="position:absolute;left:0px;top:426px;width:19px;height:1px;background:rgba(0,0,0,0.045)"></div>
<div style="position:absolute;left:19px;top:440px;width:941px;height:1px;background:rgba(0,0,0,0.083)"></div>
<div style="position:absolute;left:19px;top:441px;width:941px;height:1px;background:rgba(0,0,0,0.032)"></div>
<div style="position:absolute;left:0px;top:440px;width:19px;height:1px;background:rgba(0,0,0,0.101)"></div>
<div style="position:absolute;left:0px;top:441px;width:19px;height:1px;background:rgba(0,0,0,0.039)"></div>
<div style="position:absolute;left:19px;top:455px;width:941px;height:1px;background:rgba(0,0,0,0.087)"></div>
<div style="position:absolute;left:19px;top:456px;width:941px;height:1px;background:rgba(0,0,0,0.028)"></div>
<div style="position:absolute;left:0px;top:455px;width:19px;height:1px;background:rgba(0,0,0,0.106)"></div>
<div style="position:absolute;left:0px;top:456px;width:19px;height:1px;background:rgba(0,0,0,0.034)"></div>
<div style="position:absolute;left:19px;top:470px;width:941px;height:1px;background:rgba(0,0,0,0.092)"></div>
<div style="position:absolute;left:19px;top:471px;width:941px;height:1px;background:rgba(0,0,0,0.023)"></div>
<div style="position:absolute;left:0px;top:470px;width:19px;height:1px;background:rgba(0,0,0,0.112)"></div>
<div style="position:absolute;left:0px;top:471px;width:19px;height:1px;background:rgba(0,0,0,0.028)"></div>
<div style="position:absolute;left:19px;top:485px;width:941px;height:1px;background:rgba(0,0,0,0.097)"></div>
<div style="position:absolute;left:19px;top:486px;width:941px;height:1px;background:rgba(0,0,0,0.018)"></div>
<div style="position:absolute;left:0px;top:485px;width:19px;height:1px;background:rgba(0,0,0,0.118)"></div>
<div style="position:absolute;left:0px;top:486px;width:19px;height:1px;background:rgba(0,0,0,0.022)"></div>
<div style="position:absolute;left:19px;top:500px;width:941px;height:1px;background:rgba(0,0,0,0.101)"></div>
<div style="position:absolute;left:19px;top:501px;width:941px;height:1px;background:rgba(0,0,0,0.014)"></div>
<div style="position:absolute;left:0px;top:500px;width:19px;height:1px;background:rgba(0,0,0,0.123)"></div>
<div style="position:absolute;left:0px;top:501px;width:19px;height:1px;background:rgba(0,0,0,0.017)"></div>
<div style="position:absolute;left:19px;top:515px;width:941px;height:1px;background:rgba(0,0,0,0.106)"></div>
<div style="position:absolute;left:19px;top:516px;width:941px;height:1px;background:rgba(0,0,0,0.009)"></div>
<div style="position:absolute;left:0px;top:515px;width:19px;height:1px;background:rgba(0,0,0,0.129)"></div>
<div style="position:absolute;left:0px;top:516px;width:19px;height:1px;background:rgba(0,0,0,0.011)"></div>
<div style="position:absolute;left:19px;top:530px;width:941px;height:1px;background:rgba(0,0,0,0.110)"></div>
<div style="position:absolute;left:19px;top:531px;width:941px;height:1px;background:rgba(0,0,0,0.005)"></div>
<div style="position:absolute;left:0px;top:530px;width:19px;height:1px;background:rgba(0,0,0,0.134)"></div>
<div style="position:absolute;left:0px;top:531px;width:19px;height:1px;background:rgba(0,0,0,0.006)"></div>
<div style="position:absolute;left:19px;top:545px;width:941px;height:1px;background:rgba(0,0,0,0.115)"></div>
<div style="position:absolute;left:0px;top:545px;width:19px;height:1px;background:rgba(0,0,0,0.140)"></div>
<div style="position:absolute;left:19px;top:559px;width:941px;height:1px;background:rgba(0,0,0,0.005)"></div>
<div style="position:absolute;left:19px;top:560px;width:941px;height:1px;background:rgba(0,0,0,0.110)"></div>
<div style="position:absolute;left:0px;top:559px;width:19px;height:1px;background:rgba(0,0,0,0.006)"></div>
<div style="position:absolute;left:0px;top:560px;width:19px;height:1px;background:rgba(0,0,0,0.134)"></div>
<div style="position:absolute;left:19px;top:574px;width:941px;height:1px;background:rgba(0,0,0,0.009)"></div>
<div style="position:absolute;left:19px;top:575px;width:941px;height:1px;background:rgba(0,0,0,0.106)"></div>
<div style="position:absolute;left:0px;top:574px;width:19px;height:1px;background:rgba(0,0,0,0.011)"></div>
<div style="position:absolute;left:0px;top:575px;width:19px;height:1px;background:rgba(0,0,0,0.129)"></div>
<div style="position:absolute;left:19px;top:589px;width:941px;height:1px;background:rgba(0,0,0,0.014)"></div>
<div style="position:absolute;left:19px;top:590px;width:941px;height:1px;background:rgba(0,0,0,0.101)"></div>
<div style="position:absolute;left:0px;top:589px;width:19px;height:1px;background:rgba(0,0,0,0.017)"></div>
<div style="position:absolute;left:0px;top:590px;width:19px;height:1px;background:rgba(0,0,0,0.123)"></div>
<div style="position:absolute;left:19px;top:604px;width:941px;height:1px;background:rgba(0,0,0,0.018)"></div>
<div style="position:absolute;left:19px;top:605px;width:941px;height:1px;background:rgba(0,0,0,0.097)"></div>
<div style="position:absolute;left:0px;top:604px;width:19px;height:1px;background:rgba(0,0,0,0.022)"></div>
<div style="position:absolute;left:0px;top:605px;width:19px;height:1px;background:rgba(0,0,0,0.118)"></div>
<div style="position:absolute;left:19px;top:619px;width:941px;height:1px;background:rgba(0,0,0,0.023)"></div>
<div style="position:absolute;left:19px;top:620px;width:941px;height:1px;background:rgba(0,0,0,0.092)"></div>
<div style="position:absolute;left:0px;top:619px;width:19px;height:1px;background:rgba(0,0,0,0.028)"></div>
<div style="position:absolute;left:0px;top:620px;width:19px;height:1px;background:rgba(0,0,0,0.112)"></div>
<div style="position:absolute;left:19px;top:634px;width:941px;height:1px;background:rgba(0,0,0,0.028)"></div>
<div style="position:absolute;left:19px;top:635px;width:941px;height:1px;background:rgba(0,0,0,0.087)"></div>
<div style="position:absolute;left:0px;top:634px;width:19px;height:1px;background:rgba(0,0,0,0.034)"></div>
<div style="position:absolute;left:0px;top:635px;width:19px;height:1px;background:rgba(0,0,0,0.106)"></div>
<div style="position:absolute;left:19px;top:649px;width:941px;height:1px;background:rgba(0,0,0,0.032)"></div>
<div style="position:absolute;left:19px;top:650px;width:941px;height:1px;background:rgba(0,0,0,0.083)"></div>
<div style="position:absolute;left:0px;top:649px;width:19px;height:1px;background:rgba(0,0,0,0.039)"></div>
<div style="position:absolute;left:0px;top:650px;width:19px;height:1px;background:rgba(0,0,0,0.101)"></div>
<div style="position:absolute;left:19px;top:664px;width:941px;height:1px;background:rgba(0,0,0,0.037)"></div>
<div style="position:absolute;left:19px;top:665px;width:941px;height:1px;background:rgba(0,0,0,0.078)"></div>
<div style="position:absolute;left:0px;top:664px;width:19px;height:1px;background:rgba(0,0,0,0.045)"></div>
<div style="position:absolute;left:0px;top:665px;width:19px;height:1px;background:rgba(0,0,0,0.095)"></div>
<div style="position:absolute;left:19px;top:679px;width:941px;height:1px;background:rgba(0,0,0,0.041)"></div>
<div style="position:absolute;left:19px;top:680px;width:941px;height:1px;background:rgba(0,0,0,0.074)"></div>
<div style="position:absolute;left:0px;top:679px;width:19px;height:1px;background:rgba(0,0,0,0.050)"></div>
<div style="position:absolute;left:0px;top:680px;width:19px;height:1px;background:rgba(0,0,0,0.090)"></div>
<div style="position:absolute;left:19px;top:694px;width:941px;height:1px;background:rgba(0,0,0,0.046)"></div>
<div style="position:absolute;left:19px;top:695px;width:941px;height:1px;background:rgba(0,0,0,0.069)"></div>
<div style="position:absolute;left:0px;top:694px;width:19px;height:1px;background:rgba(0,0,0,0.056)"></div>
<div style="position:absolute;left:0px;top:695px;width:19px;height:1px;background:rgba(0,0,0,0.084)"></div>
<div style="position:absolute;left:19px;top:709px;width:941px;height:1px;background:rgba(0,0,0,0.051)"></div>
<div style="position:absolute;left:19px;top:710px;width:941px;height:1px;background:rgba(0,0,0,0.064)"></div>
<div style="position:absolute;left:0px;top:709px;width:19px;height:1px;background:rgba(0,0,0,0.062)"></div>
<div style="position:absolute;left:0px;top:710px;width:19px;height:1px;background:rgba(0,0,0,0.078)"></div>
<div style="position:absolute;left:19px;top:142px;width:1px;height:14px;background:#c8c8c8"></div>
<div style="position:absolute;left:19px;top:156px;width:1px;height:566px;background:#ababab"></div>
<div style="position:absolute;left:75px;top:142px;width:1px;height:14px;background:rgba(0,0,0,0.140)"></div>
<div style="position:absolute;left:75px;top:157px;width:1px;height:565px;background:rgba(0,0,0,0.115)"></div>
<div style="position:absolute;left:211px;top:142px;width:1px;height:14px;background:rgba(0,0,0,0.070)"></div>
<div style="position:absolute;left:212px;top:142px;width:1px;height:14px;background:rgba(0,0,0,0.070)"></div>
<div style="position:absolute;left:211px;top:157px;width:1px;height:565px;background:rgba(0,0,0,0.058)"></div>
<div style="position:absolute;left:212px;top:157px;width:1px;height:565px;background:rgba(0,0,0,0.058)"></div>
<div style="position:absolute;left:266px;top:142px;width:1px;height:14px;background:rgba(0,0,0,0.140)"></div>
<div style="position:absolute;left:266px;top:157px;width:1px;height:565px;background:rgba(0,0,0,0.115)"></div>
<div style="position:absolute;left:314px;top:142px;width:1px;height:14px;background:rgba(0,0,0,0.140)"></div>
<div style="position:absolute;left:314px;top:157px;width:1px;height:565px;background:rgba(0,0,0,0.115)"></div>
<div style="position:absolute;left:361px;top:142px;width:1px;height:14px;background:rgba(0,0,0,0.042)"></div>
<div style="position:absolute;left:362px;top:142px;width:1px;height:14px;background:rgba(0,0,0,0.098)"></div>
<div style="position:absolute;left:361px;top:157px;width:1px;height:565px;background:rgba(0,0,0,0.035)"></div>
<div style="position:absolute;left:362px;top:157px;width:1px;height:565px;background:rgba(0,0,0,0.080)"></div>
<div style="position:absolute;left:409px;top:142px;width:1px;height:14px;background:rgba(0,0,0,0.066)"></div>
<div style="position:absolute;left:410px;top:142px;width:1px;height:14px;background:rgba(0,0,0,0.074)"></div>
<div style="position:absolute;left:409px;top:157px;width:1px;height:565px;background:rgba(0,0,0,0.054)"></div>
<div style="position:absolute;left:410px;top:157px;width:1px;height:565px;background:rgba(0,0,0,0.061)"></div>
<div style="position:absolute;left:457px;top:142px;width:1px;height:14px;background:rgba(0,0,0,0.090)"></div>
<div style="position:absolute;left:458px;top:142px;width:1px;height:14px;background:rgba(0,0,0,0.050)"></div>
<div style="position:absolute;left:457px;top:157px;width:1px;height:565px;background:rgba(0,0,0,0.074)"></div>
<div style="position:absolute;left:458px;top:157px;width:1px;height:565px;background:rgba(0,0,0,0.041)"></div>
<div style="position:absolute;left:505px;top:142px;width:1px;height:14px;background:rgba(0,0,0,0.113)"></div>
<div style="position:absolute;left:506px;top:142px;width:1px;height:14px;background:rgba(0,0,0,0.027)"></div>
<div style="position:absolute;left:505px;top:157px;width:1px;height:565px;background:rgba(0,0,0,0.093)"></div>
<div style="position:absolute;left:506px;top:157px;width:1px;height:565px;background:rgba(0,0,0,0.022)"></div>
<div style="position:absolute;left:553px;top:142px;width:1px;height:14px;background:rgba(0,0,0,0.137)"></div>
<div style="position:absolute;left:553px;top:157px;width:1px;height:565px;background:rgba(0,0,0,0.113)"></div>
<div style="position:absolute;left:600px;top:142px;width:1px;height:14px;background:rgba(0,0,0,0.021)"></div>
<div style="position:absolute;left:601px;top:142px;width:1px;height:14px;background:rgba(0,0,0,0.119)"></div>
<div style="position:absolute;left:600px;top:157px;width:1px;height:565px;background:rgba(0,0,0,0.017)"></div>
<div style="position:absolute;left:601px;top:157px;width:1px;height:565px;background:rgba(0,0,0,0.098)"></div>
<div style="position:absolute;left:648px;top:142px;width:1px;height:14px;background:rgba(0,0,0,0.045)"></div>
<div style="position:absolute;left:649px;top:142px;width:1px;height:14px;background:rgba(0,0,0,0.095)"></div>
<div style="position:absolute;left:648px;top:157px;width:1px;height:565px;background:rgba(0,0,0,0.037)"></div>
<div style="position:absolute;left:649px;top:157px;width:1px;height:565px;background:rgba(0,0,0,0.078)"></div>
<div style="position:absolute;left:696px;top:142px;width:1px;height:14px;background:rgba(0,0,0,0.069)"></div>
<div style="position:absolute;left:697px;top:142px;width:1px;height:14px;background:rgba(0,0,0,0.071)"></div>
<div style="position:absolute;left:696px;top:157px;width:1px;height:565px;background:rgba(0,0,0,0.056)"></div>
<div style="position:absolute;left:697px;top:157px;width:1px;height:565px;background:rgba(0,0,0,0.059)"></div>
<div style="position:absolute;left:744px;top:142px;width:1px;height:14px;background:rgba(0,0,0,0.092)"></div>
<div style="position:absolute;left:745px;top:142px;width:1px;height:14px;background:rgba(0,0,0,0.048)"></div>
<div style="position:absolute;left:744px;top:157px;width:1px;height:565px;background:rgba(0,0,0,0.076)"></div>
<div style="position:absolute;left:745px;top:157px;width:1px;height:565px;background:rgba(0,0,0,0.039)"></div>
<div style="position:absolute;left:792px;top:142px;width:1px;height:14px;background:rgba(0,0,0,0.116)"></div>
<div style="position:absolute;left:793px;top:142px;width:1px;height:14px;background:rgba(0,0,0,0.024)"></div>
<div style="position:absolute;left:792px;top:157px;width:1px;height:565px;background:rgba(0,0,0,0.095)"></div>
<div style="position:absolute;left:793px;top:157px;width:1px;height:565px;background:rgba(0,0,0,0.020)"></div>
<div style="position:absolute;left:840px;top:142px;width:1px;height:14px;background:rgba(0,0,0,0.140)"></div>
<div style="position:absolute;left:840px;top:157px;width:1px;height:565px;background:rgba(0,0,0,0.115)"></div>
<div style="position:absolute;left:887px;top:142px;width:1px;height:14px;background:rgba(0,0,0,0.024)"></div>
<div style="position:absolute;left:888px;top:142px;width:1px;height:14px;background:rgba(0,0,0,0.116)"></div>
<div style="position:absolute;left:887px;top:157px;width:1px;height:565px;background:rgba(0,0,0,0.020)"></div>
<div style="position:absolute;left:888px;top:157px;width:1px;height:565px;background:rgba(0,0,0,0.095)"></div>
<div style="position:absolute;left:935px;top:142px;width:1px;height:14px;background:rgba(0,0,0,0.048)"></div>
<div style="position:absolute;left:936px;top:142px;width:1px;height:14px;background:rgba(0,0,0,0.092)"></div>
<div style="position:absolute;left:935px;top:157px;width:1px;height:565px;background:rgba(0,0,0,0.039)"></div>
<div style="position:absolute;left:936px;top:157px;width:1px;height:565px;background:rgba(0,0,0,0.076)"></div>
<div style="position:absolute;left:0px;top:156px;width:960px;height:1px;background:#ababab"></div>
<div style="position:absolute;left:601px;top:156px;width:49px;height:1px;background:#217346"></div>
<div style="position:absolute;left:601px;top:155px;width:49px;height:1px;background:rgba(33,115,70,0.55)"></div>
<div style="position:absolute;left:19px;top:336px;width:1px;height:16px;background:#217346"></div>
<div style="position:absolute;left:18px;top:336px;width:1px;height:16px;background:rgba(33,115,70,0.45)"></div>
<div class="t" style="left:19.5px;top:145.53px;font-size:10px;width:56.0px;text-align:center;color:#262626">A</div>
<div class="t" style="left:75.5px;top:145.53px;font-size:10px;width:136.5px;text-align:center;color:#262626">B</div>
<div class="t" style="left:212.0px;top:145.53px;font-size:10px;width:54.5px;text-align:center;color:#262626">C</div>
<div class="t" style="left:266.5px;top:145.53px;font-size:10px;width:48.0px;text-align:center;color:#262626">D</div>
<div class="t" style="left:314.5px;top:145.53px;font-size:10px;width:47.7px;text-align:center;color:#262626">E</div>
<div class="t" style="left:362.2px;top:145.53px;font-size:10px;width:47.83px;text-align:center;color:#262626">F</div>
<div class="t" style="left:410.03px;top:145.53px;font-size:10px;width:47.83px;text-align:center;color:#262626">G</div>
<div class="t" style="left:457.86px;top:145.53px;font-size:10px;width:47.83px;text-align:center;color:#262626">H</div>
<div class="t" style="left:505.69px;top:145.53px;font-size:10px;width:47.83px;text-align:center;color:#262626">I</div>
<div class="t" style="left:553.52px;top:145.53px;font-size:10px;width:47.83px;text-align:center;color:#262626">J</div>
<div class="t" style="left:601.35px;top:145.53px;font-size:10px;width:47.83px;text-align:center;color:#217346">K</div>
<div class="t" style="left:649.18px;top:145.53px;font-size:10px;width:47.83px;text-align:center;color:#262626">L</div>
<div class="t" style="left:697.01px;top:145.53px;font-size:10px;width:47.83px;text-align:center;color:#262626">M</div>
<div class="t" style="left:744.84px;top:145.53px;font-size:10px;width:47.83px;text-align:center;color:#262626">N</div>
<div class="t" style="left:792.67px;top:145.53px;font-size:10px;width:47.83px;text-align:center;color:#262626">O</div>
<div class="t" style="left:840.5px;top:145.53px;font-size:10px;width:47.83px;text-align:center;color:#262626">P</div>
<div class="t" style="left:888.33px;top:145.53px;font-size:10px;width:47.83px;text-align:center;color:#262626">Q</div>
<div class="t" style="left:936.16px;top:145.53px;font-size:10px;width:47.84px;text-align:center;color:#262626">R</div>
<div class="t" style="left:0.5px;top:159.11px;font-size:10.5px;width:19px;text-align:center;color:#262626">1</div>
<div class="t" style="left:0.5px;top:174.11px;font-size:10.5px;width:19px;text-align:center;color:#262626">2</div>
<div class="t" style="left:0.5px;top:189.11px;font-size:10.5px;width:19px;text-align:center;color:#262626">3</div>
<div class="t" style="left:0.5px;top:204.11px;font-size:10.5px;width:19px;text-align:center;color:#262626">4</div>
<div class="t" style="left:0.5px;top:219.11px;font-size:10.5px;width:19px;text-align:center;color:#262626">5</div>
<div class="t" style="left:0.5px;top:234.11px;font-size:10.5px;width:19px;text-align:center;color:#262626">6</div>
<div class="t" style="left:0.5px;top:249.11px;font-size:10.5px;width:19px;text-align:center;color:#262626">7</div>
<div class="t" style="left:0.5px;top:264.11px;font-size:10.5px;width:19px;text-align:center;color:#262626">8</div>
<div class="t" style="left:0.5px;top:279.11px;font-size:10.5px;width:19px;text-align:center;color:#262626">9</div>
<div class="t" style="left:0.5px;top:294.11px;font-size:10.5px;width:19px;text-align:center;color:#262626">10</div>
<div class="t" style="left:0.5px;top:309.11px;font-size:10.5px;width:19px;text-align:center;color:#262626">11</div>
<div class="t" style="left:0.5px;top:324.11px;font-size:10.5px;width:19px;text-align:center;color:#262626">12</div>
<div class="t" style="left:0.5px;top:339.11px;font-size:10.5px;width:19px;text-align:center;color:#217346">13</div>
<div class="t" style="left:0.5px;top:354.11px;font-size:10.5px;width:19px;text-align:center;color:#262626">14</div>
<div class="t" style="left:0.5px;top:368.11px;font-size:10.5px;width:19px;text-align:center;color:#262626">15</div>
<div class="t" style="left:0.5px;top:383.11px;font-size:10.5px;width:19px;text-align:center;color:#262626">16</div>
<div class="t" style="left:0.5px;top:398.11px;font-size:10.5px;width:19px;text-align:center;color:#262626">17</div>
<div class="t" style="left:0.5px;top:413.11px;font-size:10.5px;width:19px;text-align:center;color:#262626">18</div>
<div class="t" style="left:0.5px;top:428.11px;font-size:10.5px;width:19px;text-align:center;color:#262626">19</div>
<div class="t" style="left:0.5px;top:443.11px;font-size:10.5px;width:19px;text-align:center;color:#262626">20</div>
<div class="t" style="left:0.5px;top:458.11px;font-size:10.5px;width:19px;text-align:center;color:#262626">21</div>
<div class="t" style="left:0.5px;top:473.11px;font-size:10.5px;width:19px;text-align:center;color:#262626">22</div>
<div class="t" style="left:0.5px;top:488.11px;font-size:10.5px;width:19px;text-align:center;color:#262626">23</div>
<div class="t" style="left:0.5px;top:503.11px;font-size:10.5px;width:19px;text-align:center;color:#262626">24</div>
<div class="t" style="left:0.5px;top:518.11px;font-size:10.5px;width:19px;text-align:center;color:#262626">25</div>
<div class="t" style="left:0.5px;top:533.11px;font-size:10.5px;width:19px;text-align:center;color:#262626">26</div>
<div class="t" style="left:0.5px;top:548.11px;font-size:10.5px;width:19px;text-align:center;color:#262626">27</div>
<div class="t" style="left:0.5px;top:563.11px;font-size:10.5px;width:19px;text-align:center;color:#262626">28</div>
<div class="t" style="left:0.5px;top:578.11px;font-size:10.5px;width:19px;text-align:center;color:#262626">29</div>
<div class="t" style="left:0.5px;top:593.11px;font-size:10.5px;width:19px;text-align:center;color:#262626">30</div>
<div class="t" style="left:0.5px;top:608.11px;font-size:10.5px;width:19px;text-align:center;color:#262626">31</div>
<div class="t" style="left:0.5px;top:623.11px;font-size:10.5px;width:19px;text-align:center;color:#262626">32</div>
<div class="t" style="left:0.5px;top:638.11px;font-size:10.5px;width:19px;text-align:center;color:#262626">33</div>
<div class="t" style="left:0.5px;top:653.11px;font-size:10.5px;width:19px;text-align:center;color:#262626">34</div>
<div class="t" style="left:0.5px;top:668.11px;font-size:10.5px;width:19px;text-align:center;color:#262626">35</div>
<div class="t" style="left:0.5px;top:683.11px;font-size:10.5px;width:19px;text-align:center;color:#262626">36</div>
<div class="t" style="left:0.5px;top:698.11px;font-size:10.5px;width:19px;text-align:center;color:#262626">37</div>
<div class="t" style="left:0.5px;top:713.11px;font-size:10.5px;width:19px;text-align:center;color:#262626">38</div>
<div class="t" style="left:78px;top:159.53px;font-size:10px;letter-spacing:-0.3px;font-weight:bold;color:#000">Beyanname Numarası</div>
<div class="t" style="left:214px;top:159.53px;font-size:10px;letter-spacing:-0.3px;font-weight:bold;color:#000">Ürün Kodu</div>
<div class="t" style="left:268px;top:159.53px;font-size:10px;letter-spacing:-0.3px;font-weight:bold;color:#000">Sıra</div>
<div class="t" style="left:78px;top:174.53px;font-size:10px;letter-spacing:-0.3px;color:#000">20233100IM0025658</div>
<div class="t" style="left:214px;top:174.53px;font-size:10px;letter-spacing:-0.3px;color:#000">A1245</div>
<div class="t" style="left:266px;top:174.53px;font-size:10px;width:46px;text-align:right;letter-spacing:-0.3px;color:#000">23</div>
<div class="t" style="left:78px;top:189.53px;font-size:10px;letter-spacing:-0.3px;color:#000">20233100IM0025659</div>
<div class="t" style="left:214px;top:189.53px;font-size:10px;letter-spacing:-0.3px;color:#000">B3466</div>
<div class="t" style="left:266px;top:189.53px;font-size:10px;width:46px;text-align:right;letter-spacing:-0.3px;color:#000">22</div>
<div class="t" style="left:78px;top:204.53px;font-size:10px;letter-spacing:-0.3px;color:#000">20233100IM0025660</div>
<div class="t" style="left:214px;top:204.53px;font-size:10px;letter-spacing:-0.3px;color:#000">A1244</div>
<div class="t" style="left:266px;top:204.53px;font-size:10px;width:46px;text-align:right;letter-spacing:-0.3px;color:#000">21</div>
<div class="t" style="left:78px;top:219.53px;font-size:10px;letter-spacing:-0.3px;color:#000">20233100IM0025661</div>
<div class="t" style="left:214px;top:219.53px;font-size:10px;letter-spacing:-0.3px;color:#000">B3465</div>
<div class="t" style="left:266px;top:219.53px;font-size:10px;width:46px;text-align:right;letter-spacing:-0.3px;color:#000">20</div>
<div class="t" style="left:78px;top:234.53px;font-size:10px;letter-spacing:-0.3px;color:#000">20233100IM0025662</div>
<div class="t" style="left:214px;top:234.53px;font-size:10px;letter-spacing:-0.3px;color:#000">A1243</div>
<div class="t" style="left:266px;top:234.53px;font-size:10px;width:46px;text-align:right;letter-spacing:-0.3px;color:#000">19</div>
<div class="t" style="left:78px;top:249.53px;font-size:10px;letter-spacing:-0.3px;color:#000">20233100IM0025663</div>
<div class="t" style="left:214px;top:249.53px;font-size:10px;letter-spacing:-0.3px;color:#000">B3464</div>
<div class="t" style="left:266px;top:249.53px;font-size:10px;width:46px;text-align:right;letter-spacing:-0.3px;color:#000">18</div>
<div class="t" style="left:78px;top:264.54px;font-size:10px;letter-spacing:-0.3px;color:#000">20233100IM0025664</div>
<div class="t" style="left:214px;top:264.54px;font-size:10px;letter-spacing:-0.3px;color:#000">A1242</div>
<div class="t" style="left:266px;top:264.54px;font-size:10px;width:46px;text-align:right;letter-spacing:-0.3px;color:#000">17</div>
<div class="t" style="left:78px;top:279.54px;font-size:10px;letter-spacing:-0.3px;color:#000">20233100IM0025665</div>
<div class="t" style="left:214px;top:279.54px;font-size:10px;letter-spacing:-0.3px;color:#000">B3463</div>
<div class="t" style="left:266px;top:279.54px;font-size:10px;width:46px;text-align:right;letter-spacing:-0.3px;color:#000">16</div>
<div class="t" style="left:78px;top:294.54px;font-size:10px;letter-spacing:-0.3px;color:#000">20233100IM0025666</div>
<div class="t" style="left:214px;top:294.54px;font-size:10px;letter-spacing:-0.3px;color:#000">A1241</div>
<div class="t" style="left:266px;top:294.54px;font-size:10px;width:46px;text-align:right;letter-spacing:-0.3px;color:#000">15</div>
<div class="t" style="left:78px;top:309.54px;font-size:10px;letter-spacing:-0.3px;color:#000">20233100IM0025667</div>
<div class="t" style="left:214px;top:309.54px;font-size:10px;letter-spacing:-0.3px;color:#000">B3462</div>
<div class="t" style="left:266px;top:309.54px;font-size:10px;width:46px;text-align:right;letter-spacing:-0.3px;color:#000">14</div>
<div class="t" style="left:78px;top:324.54px;font-size:10px;letter-spacing:-0.3px;color:#000">20233100IM0025668</div>
<div class="t" style="left:214px;top:324.54px;font-size:10px;letter-spacing:-0.3px;color:#000">A1240</div>
<div class="t" style="left:266px;top:324.54px;font-size:10px;width:46px;text-align:right;letter-spacing:-0.3px;color:#000">13</div>
<div class="t" style="left:78px;top:339.54px;font-size:10px;letter-spacing:-0.3px;color:#000">20233100IM0025669</div>
<div class="t" style="left:214px;top:339.54px;font-size:10px;letter-spacing:-0.3px;color:#000">B3461</div>
<div class="t" style="left:266px;top:339.54px;font-size:10px;width:46px;text-align:right;letter-spacing:-0.3px;color:#000">12</div>
<div class="t" style="left:78px;top:354.54px;font-size:10px;letter-spacing:-0.3px;color:#000">20233100IM0025670</div>
<div class="t" style="left:214px;top:354.54px;font-size:10px;letter-spacing:-0.3px;color:#000">A1239</div>
<div class="t" style="left:266px;top:354.54px;font-size:10px;width:46px;text-align:right;letter-spacing:-0.3px;color:#000">11</div>
<div class="t" style="left:78px;top:368.54px;font-size:10px;letter-spacing:-0.3px;color:#000">20233100IM0025671</div>
<div class="t" style="left:214px;top:368.54px;font-size:10px;letter-spacing:-0.3px;color:#000">B3460</div>
<div class="t" style="left:266px;top:368.54px;font-size:10px;width:46px;text-align:right;letter-spacing:-0.3px;color:#000">10</div>
<div class="t" style="left:78px;top:383.54px;font-size:10px;letter-spacing:-0.3px;color:#000">20233100IM0025672</div>
<div class="t" style="left:214px;top:383.54px;font-size:10px;letter-spacing:-0.3px;color:#000">A1238</div>
<div class="t" style="left:266px;top:383.54px;font-size:10px;width:46px;text-align:right;letter-spacing:-0.3px;color:#000">9</div>
<div class="t" style="left:78px;top:398.54px;font-size:10px;letter-spacing:-0.3px;color:#000">20233100IM0025673</div>
<div class="t" style="left:214px;top:398.54px;font-size:10px;letter-spacing:-0.3px;color:#000">B3459</div>
<div class="t" style="left:266px;top:398.54px;font-size:10px;width:46px;text-align:right;letter-spacing:-0.3px;color:#000">8</div>
<div class="t" style="left:78px;top:413.54px;font-size:10px;letter-spacing:-0.3px;color:#000">20233100IM0025674</div>
<div class="t" style="left:214px;top:413.54px;font-size:10px;letter-spacing:-0.3px;color:#000">A1237</div>
<div class="t" style="left:266px;top:413.54px;font-size:10px;width:46px;text-align:right;letter-spacing:-0.3px;color:#000">7</div>
<div class="t" style="left:78px;top:428.54px;font-size:10px;letter-spacing:-0.3px;color:#000">20233100IM0025675</div>
<div class="t" style="left:214px;top:428.54px;font-size:10px;letter-spacing:-0.3px;color:#000">B3458</div>
<div class="t" style="left:266px;top:428.54px;font-size:10px;width:46px;text-align:right;letter-spacing:-0.3px;color:#000">6</div>
<div class="t" style="left:78px;top:443.54px;font-size:10px;letter-spacing:-0.3px;color:#000">20233100IM0025676</div>
<div class="t" style="left:214px;top:443.54px;font-size:10px;letter-spacing:-0.3px;color:#000">A1236</div>
<div class="t" style="left:266px;top:443.54px;font-size:10px;width:46px;text-align:right;letter-spacing:-0.3px;color:#000">5</div>
<div class="t" style="left:78px;top:458.54px;font-size:10px;letter-spacing:-0.3px;color:#000">20233100IM0025677</div>
<div class="t" style="left:214px;top:458.54px;font-size:10px;letter-spacing:-0.3px;color:#000">B3457</div>
<div class="t" style="left:266px;top:458.54px;font-size:10px;width:46px;text-align:right;letter-spacing:-0.3px;color:#000">4</div>
<div class="t" style="left:78px;top:473.54px;font-size:10px;letter-spacing:-0.3px;color:#000">20233100IM0025678</div>
<div class="t" style="left:214px;top:473.54px;font-size:10px;letter-spacing:-0.3px;color:#000">A1235</div>
<div class="t" style="left:266px;top:473.54px;font-size:10px;width:46px;text-align:right;letter-spacing:-0.3px;color:#000">3</div>
<div class="t" style="left:78px;top:488.54px;font-size:10px;letter-spacing:-0.3px;color:#000">20233100IM0025679</div>
<div class="t" style="left:214px;top:488.54px;font-size:10px;letter-spacing:-0.3px;color:#000">B3456</div>
<div class="t" style="left:266px;top:488.54px;font-size:10px;width:46px;text-align:right;letter-spacing:-0.3px;color:#000">2</div>
<div class="t" style="left:78px;top:503.54px;font-size:10px;letter-spacing:-0.3px;color:#000">20233100IM0025680</div>
<div class="t" style="left:214px;top:503.54px;font-size:10px;letter-spacing:-0.3px;color:#000">A1234</div>
<div class="t" style="left:266px;top:503.54px;font-size:10px;width:46px;text-align:right;letter-spacing:-0.3px;color:#000">1</div>
<div class="t" style="left:78px;top:518.53px;font-size:10px;letter-spacing:-0.3px;color:#000">20233100IM0025681</div>
<div class="t" style="left:212px;top:518.53px;font-size:10px;width:55px;text-align:center;letter-spacing:-0.3px;color:#000">#YOK</div>
<div class="t" style="left:266px;top:518.53px;font-size:10px;width:48px;text-align:center;letter-spacing:-0.3px;color:#000">#YOK</div>
<svg style="left:213px;top:516px" width="5" height="5" viewBox="0 0 5 5"><path d="M0 0H4.5L0 4.5Z" fill="#1e8c3a"/></svg>
<svg style="left:267px;top:516px" width="5" height="5" viewBox="0 0 5 5"><path d="M0 0H4.5L0 4.5Z" fill="#1e8c3a"/></svg>
<div class="t" style="left:78px;top:533.53px;font-size:10px;letter-spacing:-0.3px;color:#000">20233100IM0025682</div>
<div class="t" style="left:212px;top:533.53px;font-size:10px;width:55px;text-align:center;letter-spacing:-0.3px;color:#000">#YOK</div>
<div class="t" style="left:266px;top:533.53px;font-size:10px;width:48px;text-align:center;letter-spacing:-0.3px;color:#000">#YOK</div>
<svg style="left:213px;top:531px" width="5" height="5" viewBox="0 0 5 5"><path d="M0 0H4.5L0 4.5Z" fill="#1e8c3a"/></svg>
<svg style="left:267px;top:531px" width="5" height="5" viewBox="0 0 5 5"><path d="M0 0H4.5L0 4.5Z" fill="#1e8c3a"/></svg>
<div class="t" style="left:78px;top:548.53px;font-size:10px;letter-spacing:-0.3px;color:#000">20233100IM0025683</div>
<div class="t" style="left:212px;top:548.53px;font-size:10px;width:55px;text-align:center;letter-spacing:-0.3px;color:#000">#YOK</div>
<div class="t" style="left:266px;top:548.53px;font-size:10px;width:48px;text-align:center;letter-spacing:-0.3px;color:#000">#YOK</div>
<svg style="left:213px;top:546px" width="5" height="5" viewBox="0 0 5 5"><path d="M0 0H4.5L0 4.5Z" fill="#1e8c3a"/></svg>
<svg style="left:267px;top:546px" width="5" height="5" viewBox="0 0 5 5"><path d="M0 0H4.5L0 4.5Z" fill="#1e8c3a"/></svg>
<div class="t" style="left:78px;top:563.53px;font-size:10px;letter-spacing:-0.3px;color:#000">20233100IM0025684</div>
<div class="t" style="left:212px;top:563.53px;font-size:10px;width:55px;text-align:center;letter-spacing:-0.3px;color:#000">#YOK</div>
<div class="t" style="left:266px;top:563.53px;font-size:10px;width:48px;text-align:center;letter-spacing:-0.3px;color:#000">#YOK</div>
<svg style="left:213px;top:561px" width="5" height="5" viewBox="0 0 5 5"><path d="M0 0H4.5L0 4.5Z" fill="#1e8c3a"/></svg>
<svg style="left:267px;top:561px" width="5" height="5" viewBox="0 0 5 5"><path d="M0 0H4.5L0 4.5Z" fill="#1e8c3a"/></svg>
<div class="t" style="left:78px;top:578.53px;font-size:10px;letter-spacing:-0.3px;color:#000">20233100IM0025685</div>
<div class="t" style="left:212px;top:578.53px;font-size:10px;width:55px;text-align:center;letter-spacing:-0.3px;color:#000">#YOK</div>
<div class="t" style="left:266px;top:578.53px;font-size:10px;width:48px;text-align:center;letter-spacing:-0.3px;color:#000">#YOK</div>
<svg style="left:213px;top:576px" width="5" height="5" viewBox="0 0 5 5"><path d="M0 0H4.5L0 4.5Z" fill="#1e8c3a"/></svg>
<svg style="left:267px;top:576px" width="5" height="5" viewBox="0 0 5 5"><path d="M0 0H4.5L0 4.5Z" fill="#1e8c3a"/></svg>
<div class="t" style="left:78px;top:593.53px;font-size:10px;letter-spacing:-0.3px;color:#000">20233100IM0025686</div>
<div class="t" style="left:212px;top:593.53px;font-size:10px;width:55px;text-align:center;letter-spacing:-0.3px;color:#000">#YOK</div>
<div class="t" style="left:266px;top:593.53px;font-size:10px;width:48px;text-align:center;letter-spacing:-0.3px;color:#000">#YOK</div>
<svg style="left:213px;top:591px" width="5" height="5" viewBox="0 0 5 5"><path d="M0 0H4.5L0 4.5Z" fill="#1e8c3a"/></svg>
<svg style="left:267px;top:591px" width="5" height="5" viewBox="0 0 5 5"><path d="M0 0H4.5L0 4.5Z" fill="#1e8c3a"/></svg>
<div class="t" style="left:78px;top:608.53px;font-size:10px;letter-spacing:-0.3px;color:#000">20233100IM0025687</div>
<div class="t" style="left:212px;top:608.53px;font-size:10px;width:55px;text-align:center;letter-spacing:-0.3px;color:#000">#YOK</div>
<div class="t" style="left:266px;top:608.53px;font-size:10px;width:48px;text-align:center;letter-spacing:-0.3px;color:#000">#YOK</div>
<svg style="left:213px;top:606px" width="5" height="5" viewBox="0 0 5 5"><path d="M0 0H4.5L0 4.5Z" fill="#1e8c3a"/></svg>
<svg style="left:267px;top:606px" width="5" height="5" viewBox="0 0 5 5"><path d="M0 0H4.5L0 4.5Z" fill="#1e8c3a"/></svg>
<div class="t" style="left:78px;top:623.53px;font-size:10px;letter-spacing:-0.3px;color:#000">20233100IM0025688</div>
<div class="t" style="left:212px;top:623.53px;font-size:10px;width:55px;text-align:center;letter-spacing:-0.3px;color:#000">#YOK</div>
<div class="t" style="left:266px;top:623.53px;font-size:10px;width:48px;text-align:center;letter-spacing:-0.3px;color:#000">#YOK</div>
<svg style="left:213px;top:621px" width="5" height="5" viewBox="0 0 5 5"><path d="M0 0H4.5L0 4.5Z" fill="#1e8c3a"/></svg>
<svg style="left:267px;top:621px" width="5" height="5" viewBox="0 0 5 5"><path d="M0 0H4.5L0 4.5Z" fill="#1e8c3a"/></svg>
<div class="t" style="left:78px;top:638.53px;font-size:10px;letter-spacing:-0.3px;color:#000">20233100IM0025689</div>
<div class="t" style="left:212px;top:638.53px;font-size:10px;width:55px;text-align:center;letter-spacing:-0.3px;color:#000">#YOK</div>
<div class="t" style="left:266px;top:638.53px;font-size:10px;width:48px;text-align:center;letter-spacing:-0.3px;color:#000">#YOK</div>
<svg style="left:213px;top:636px" width="5" height="5" viewBox="0 0 5 5"><path d="M0 0H4.5L0 4.5Z" fill="#1e8c3a"/></svg>
<svg style="left:267px;top:636px" width="5" height="5" viewBox="0 0 5 5"><path d="M0 0H4.5L0 4.5Z" fill="#1e8c3a"/></svg>
<div class="t" style="left:78px;top:653.53px;font-size:10px;letter-spacing:-0.3px;color:#000">20233100IM0025690</div>
<div class="t" style="left:212px;top:653.53px;font-size:10px;width:55px;text-align:center;letter-spacing:-0.3px;color:#000">#YOK</div>
<div class="t" style="left:266px;top:653.53px;font-size:10px;width:48px;text-align:center;letter-spacing:-0.3px;color:#000">#YOK</div>
<svg style="left:213px;top:651px" width="5" height="5" viewBox="0 0 5 5"><path d="M0 0H4.5L0 4.5Z" fill="#1e8c3a"/></svg>
<svg style="left:267px;top:651px" width="5" height="5" viewBox="0 0 5 5"><path d="M0 0H4.5L0 4.5Z" fill="#1e8c3a"/></svg>
<div class="t" style="left:78px;top:668.53px;font-size:10px;letter-spacing:-0.3px;color:#000">20233100IM0025691</div>
<div class="t" style="left:212px;top:668.53px;font-size:10px;width:55px;text-align:center;letter-spacing:-0.3px;color:#000">#YOK</div>
<div class="t" style="left:266px;top:668.53px;font-size:10px;width:48px;text-align:center;letter-spacing:-0.3px;color:#000">#YOK</div>
<svg style="left:213px;top:666px" width="5" height="5" viewBox="0 0 5 5"><path d="M0 0H4.5L0 4.5Z" fill="#1e8c3a"/></svg>
<svg style="left:267px;top:666px" width="5" height="5" viewBox="0 0 5 5"><path d="M0 0H4.5L0 4.5Z" fill="#1e8c3a"/></svg>
<div class="t" style="left:78px;top:683.53px;font-size:10px;letter-spacing:-0.3px;color:#000">20233100IM0025692</div>
<div class="t" style="left:212px;top:683.53px;font-size:10px;width:55px;text-align:center;letter-spacing:-0.3px;color:#000">#YOK</div>
<div class="t" style="left:266px;top:683.53px;font-size:10px;width:48px;text-align:center;letter-spacing:-0.3px;color:#000">#YOK</div>
<svg style="left:213px;top:681px" width="5" height="5" viewBox="0 0 5 5"><path d="M0 0H4.5L0 4.5Z" fill="#1e8c3a"/></svg>
<svg style="left:267px;top:681px" width="5" height="5" viewBox="0 0 5 5"><path d="M0 0H4.5L0 4.5Z" fill="#1e8c3a"/></svg>
<div class="t" style="left:78px;top:698.53px;font-size:10px;letter-spacing:-0.3px;color:#000">20233100IM0025693</div>
<div class="t" style="left:212px;top:698.53px;font-size:10px;width:55px;text-align:center;letter-spacing:-0.3px;color:#000">#YOK</div>
<div class="t" style="left:266px;top:698.53px;font-size:10px;width:48px;text-align:center;letter-spacing:-0.3px;color:#000">#YOK</div>
<svg style="left:213px;top:696px" width="5" height="5" viewBox="0 0 5 5"><path d="M0 0H4.5L0 4.5Z" fill="#1e8c3a"/></svg>
<svg style="left:267px;top:696px" width="5" height="5" viewBox="0 0 5 5"><path d="M0 0H4.5L0 4.5Z" fill="#1e8c3a"/></svg>
<div class="t" style="left:78px;top:713.53px;font-size:10px;letter-spacing:-0.3px;color:#000">20233100IM0025694</div>
<div class="t" style="left:212px;top:713.53px;font-size:10px;width:55px;text-align:center;letter-spacing:-0.3px;color:#000">#YOK</div>
<div class="t" style="left:266px;top:713.53px;font-size:10px;width:48px;text-align:center;letter-spacing:-0.3px;color:#000">#YOK</div>
<svg style="left:213px;top:711px" width="5" height="5" viewBox="0 0 5 5"><path d="M0 0H4.5L0 4.5Z" fill="#1e8c3a"/></svg>
<svg style="left:267px;top:711px" width="5" height="5" viewBox="0 0 5 5"><path d="M0 0H4.5L0 4.5Z" fill="#1e8c3a"/></svg>
<div style="position:absolute;left:600px;top:335px;width:51px;height:17px;border:2px solid #217346;box-sizing:border-box"></div>
<div style="position:absolute;left:646px;top:348px;width:6px;height:6px;background:#fff"></div>
<div style="position:absolute;left:647px;top:349px;width:5px;height:4px;background:#217346"></div>
<div style="position:absolute;left:0px;top:722px;width:960px;height:22px;background:#e6e6e6;border-top:1px solid #c6c6c6;border-bottom:1px solid #c6c6c6;box-sizing:border-box"></div>
<svg style="left:20px;top:729px" width="4" height="7" viewBox="0 0 4 7"><path d="M3.5 0.5V6.5L0.5 3.5Z" fill="#c0c0c0"/></svg>
<svg style="left:42px;top:729px" width="4" height="7" viewBox="0 0 4 7"><path d="M0.5 0.5V6.5L3.5 3.5Z" fill="#c0c0c0"/></svg>
<div style="position:absolute;left:75px;top:722px;width:74px;height:19px;background:#fff;border-left:1px solid #c6c6c6;border-right:1px solid #c6c6c6;box-sizing:border-box"></div>
<div style="position:absolute;left:76px;top:740px;width:72px;height:2px;background:#217346"></div>
<div class="t" style="left:85px;top:728.03px;font-size:10px;font-weight:bold;color:#217346;letter-spacing:-0.2px">Aranan Veri</div>
<div class="t" style="left:159px;top:727.96px;font-size:9.5px;color:#555">Veri Yığını</div>
<div style="position:absolute;left:214px;top:726px;width:1px;height:13px;background:#c6c6c6"></div>
<svg style="left:239px;top:726px" width="13" height="13" viewBox="0 0 13 13"><circle cx="6.3" cy="6.5" r="5.6" fill="none" stroke="#666" stroke-width="1"/><path d="M6.3 3.5V9.5M3.3 6.5H9.3" stroke="#666" stroke-width="1.2"/></svg>
<div style="position:absolute;left:861.5px;top:729.5px;width:1.2px;height:1.2px;background:#999"></div>
<div style="position:absolute;left:861.5px;top:732.5px;width:1.2px;height:1.2px;background:#999"></div>
<div style="position:absolute;left:861.5px;top:735.5px;width:1.2px;height:1.2px;background:#999"></div>
<div style="position:absolute;left:874px;top:727px;width:100px;height:12px;background:#fff;border:1px solid #c6c6c6;box-sizing:border-box"></div>
<div style="position:absolute;left:885px;top:727px;width:1px;height:12px;background:#c6c6c6"></div>
<svg style="left:877px;top:730px" width="4" height="6" viewBox="0 0 4 6"><path d="M3.5 0V6L0.5 3Z" fill="#555"/></svg>
<div style="position:absolute;left:0px;top:744px;width:960px;height:6px;background:#f1f1f1"></div>
<div class="t" style="left:6px;top:748.05px;font-size:8.8px;color:#444">Hazır</div>
<svg style="left:40px;top:746px" width="12" height="6" viewBox="0 0 12 6"><circle cx="3.5" cy="3.5" r="2.8" fill="#8a8a8a"/><rect x="7" y="1" width="4.5" height="5" fill="none" stroke="#8a8a8a" stroke-width="1.2"/></svg>
<div style="position:absolute;left:0px;top:39px;width:1px;height:711px;background:#3a8558"></div>
<div style="position:absolute;left:1px;top:109px;width:1px;height:641px;background:rgba(255,255,255,0.45)"></div>
</body></html>
